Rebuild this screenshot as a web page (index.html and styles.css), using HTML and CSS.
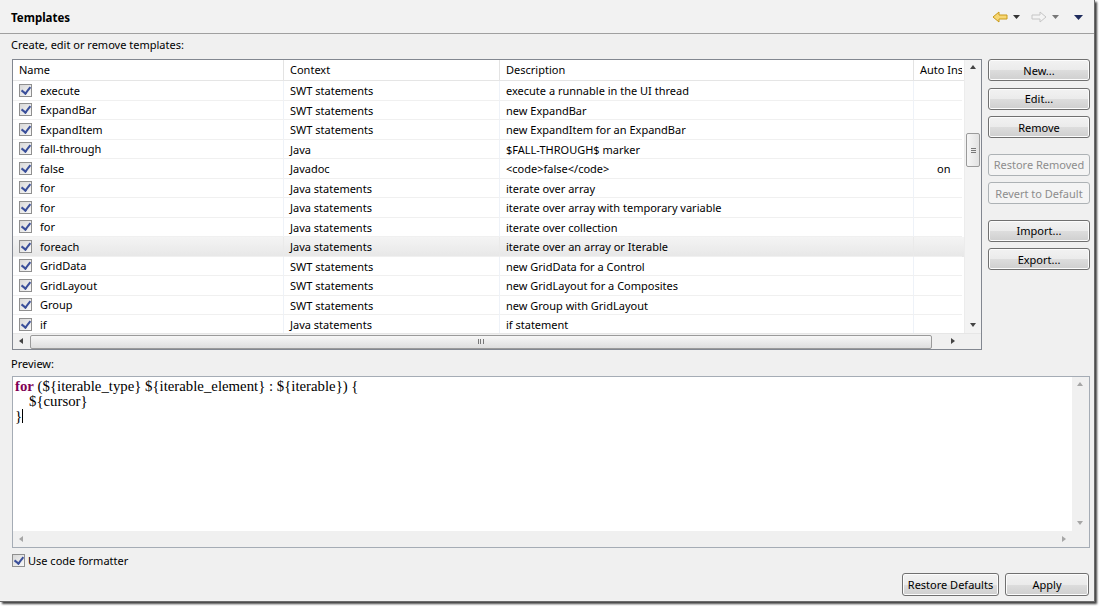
FILE: index.html
```html
<!DOCTYPE html>
<html>
<head>
<meta charset="utf-8">
<link rel="stylesheet" href="styles.css">
</head>
<body>
<div class="window">
  <div class="header">
    <div class="title">Templates</div>
    <div class="nav">
      <svg class="arrow" width="16" height="12" viewBox="0 0 16 12"><path d="M1 6 L7 1 L7 4 L15 4 L15 8 L7 8 L7 11 Z" fill="#f7d774" stroke="#c99a1a" stroke-width="1" stroke-linejoin="round"/></svg>
      <svg class="drop" width="7" height="4" viewBox="0 0 7 4"><path d="M0 0 L7 0 L3.5 4 Z" fill="#333"/></svg>
      <svg class="arrow" width="16" height="12" viewBox="0 0 16 12"><path d="M15 6 L9 1 L9 4 L1 4 L1 8 L9 8 L9 11 Z" fill="#f4f4f4" stroke="#c6c6c6" stroke-width="1" stroke-linejoin="round"/></svg>
      <svg class="drop" width="7" height="4" viewBox="0 0 7 4"><path d="M0 0 L7 0 L3.5 4 Z" fill="#777"/></svg>
      <svg class="drop big" width="9" height="5" viewBox="0 0 9 5"><path d="M0 0 L9 0 L4.5 5 Z" fill="#1e2b5c"/></svg>
    </div>
  </div>
  <div class="content">
    <div class="label">Create, edit or remove templates:</div>
    <div class="top">
      <div class="table">
        <div class="tmain">
          <div class="tcols">
            <div class="thead">
              <div class="c c1">Name</div>
              <div class="c c2">Context</div>
              <div class="c c3">Description</div>
              <div class="c c4">Auto Ins</div>
            </div>
            <div class="tbody">
              <div class="row"><div class="c c1"><span class="cb"></span>execute</div><div class="c c2">SWT statements</div><div class="c c3">execute a runnable in the UI thread</div><div class="c c4"></div></div>
              <div class="row"><div class="c c1"><span class="cb"></span>ExpandBar</div><div class="c c2">SWT statements</div><div class="c c3">new ExpandBar</div><div class="c c4"></div></div>
              <div class="row"><div class="c c1"><span class="cb"></span>ExpandItem</div><div class="c c2">SWT statements</div><div class="c c3">new ExpandItem for an ExpandBar</div><div class="c c4"></div></div>
              <div class="row"><div class="c c1"><span class="cb"></span>fall-through</div><div class="c c2">Java</div><div class="c c3">$FALL-THROUGH$ marker</div><div class="c c4"></div></div>
              <div class="row"><div class="c c1"><span class="cb"></span>false</div><div class="c c2">Javadoc</div><div class="c c3">&lt;code&gt;false&lt;/code&gt;</div><div class="c c4 on">on</div></div>
              <div class="row"><div class="c c1"><span class="cb"></span>for</div><div class="c c2">Java statements</div><div class="c c3">iterate over array</div><div class="c c4"></div></div>
              <div class="row"><div class="c c1"><span class="cb"></span>for</div><div class="c c2">Java statements</div><div class="c c3">iterate over array with temporary variable</div><div class="c c4"></div></div>
              <div class="row"><div class="c c1"><span class="cb"></span>for</div><div class="c c2">Java statements</div><div class="c c3">iterate over collection</div><div class="c c4"></div></div>
              <div class="row sel"><div class="c c1"><span class="cb"></span>foreach</div><div class="c c2">Java statements</div><div class="c c3">iterate over an array or Iterable</div><div class="c c4"></div></div>
              <div class="row"><div class="c c1"><span class="cb"></span>GridData</div><div class="c c2">SWT statements</div><div class="c c3">new GridData for a Control</div><div class="c c4"></div></div>
              <div class="row"><div class="c c1"><span class="cb"></span>GridLayout</div><div class="c c2">SWT statements</div><div class="c c3">new GridLayout for a Composites</div><div class="c c4"></div></div>
              <div class="row"><div class="c c1"><span class="cb"></span>Group</div><div class="c c2">SWT statements</div><div class="c c3">new Group with GridLayout</div><div class="c c4"></div></div>
              <div class="row"><div class="c c1"><span class="cb"></span>if</div><div class="c c2">Java statements</div><div class="c c3">if statement</div><div class="c c4"></div></div>
            </div>
          </div>
          <div class="vscroll">
            <span class="sa up"></span>
            <div class="vtrack"><div class="vthumb"><span class="grip"></span></div></div>
            <span class="sa down"></span>
          </div>
        </div>
        <div class="hscrollrow">
          <div class="hscroll">
            <span class="sa left"></span>
            <div class="hthumb"><span class="hgrip"></span></div>
            <span class="sa right"></span>
          </div>
          <div class="corner"></div>
        </div>
      </div>
      <div class="buttons">
        <button class="btn">New...</button>
        <button class="btn">Edit...</button>
        <button class="btn">Remove</button>
        <button class="btn dis gap">Restore Removed</button>
        <button class="btn dis">Revert to Default</button>
        <button class="btn gap">Import...</button>
        <button class="btn">Export...</button>
      </div>
    </div>
    <div class="label preview-label">Preview:</div>
    <div class="editor">
      <div class="emain">
        <div class="code"><div><b class="kw">for</b> (${iterable_type} ${iterable_element} : ${iterable}) {</div><div class="ind">${cursor}</div><div>}<span class="caret"></span></div></div>
        <div class="evscroll"><span class="sa up light"></span><span class="sa down light"></span></div>
      </div>
      <div class="ehscroll"><span class="sa left light"></span><span class="sa right light"></span><span class="ecorner"></span></div>
    </div>
    <div class="formatter"><span class="cb"></span>Use code formatter</div>
    <div class="bottom">
      <button class="btn rd">Restore Defaults</button>
      <button class="btn apply">Apply</button>
    </div>
  </div>
</div>
</body>
</html>
```
FILE: styles.css
```css
* { box-sizing: border-box; }
html, body { margin: 0; padding: 0; }
body {
  width: 1099px; height: 606px; background: #fff; overflow: hidden;
  font-family: "Noto Sans", "Open Sans", sans-serif; font-size: 11px; color: #000;
}
.window {
  width: 1095px; height: 602px; background: #f0f0f0;
  border-right: 1px solid #6b6b6b; border-bottom: 1px solid #6b6b6b;
  box-shadow: 2px 2px 2px rgba(0,0,0,0.75);
  display: flex; flex-direction: column;
}
.header {
  flex: none;
  height: 34px; border-bottom: 1px solid #a0a0a0;
  display: flex; align-items: center; justify-content: space-between;
  padding: 1px 11px 0 11px; background: #f2f2f2;
}
.title { font-weight: bold; font-size: 11.5px; }
.nav { display: flex; align-items: center; gap: 5px; }
.nav .drop { margin-right: 6px; }
.nav .big { margin-left: 4px; margin-right: 0; }
.content { padding: 0 0 0 11px; display: flex; flex-direction: column; flex: none; }
.content > * { flex: none; }
.label { height: 25px; line-height: 20px; padding-top: 1px; }
.top { display: flex; gap: 6px; height: 291px; }
.table {
  width: 970px; height: 291px; margin-left: 1px;
  border: 1px solid #828790; background: #fff;
  display: flex; flex-direction: column;
}
.tmain { display: flex; flex: 1; min-height: 0; }
.tcols { flex: 1; overflow: hidden; }
.thead { display: flex; height: 21px; border-bottom: 1px solid #e5e5e5; background: #fff; }
.thead .c { line-height: 20px; border-right: 1px solid #e3e3e3; }
.thead .c4 { border-right: none; }
.c { padding-left: 6px; white-space: nowrap; overflow: hidden; flex: none; }
.c1 { width: 271px; }
.c2 { width: 216px; }
.c3 { width: 414px; }
.c4 { width: 48px; }
.tbody { display: flex; flex-direction: column; }
.row { display: flex; height: 19.5px; line-height: 19px; flex: none; }
.row .c { border-right: 1px solid #eef2f8; border-bottom: 1px solid #f0f0f0; }
.row .c4 { border-right: none; }
.row .c1 { display: flex; align-items: center; }
.row.sel { background: linear-gradient(#f4f4f4, #e7e7e7); }
.row.sel .c { border-right-color: #eaeaea; }
.c4.on { padding-left: 23px; }
.cb {
  width: 13px; height: 13px; border: 1px solid #8f8f8f; background: linear-gradient(135deg,#d8d8d8,#f8f8f8);
  position: relative; display: inline-block; margin-right: 8px; flex: none;
}
.cb::after {
  content: ""; position: absolute; left: 3px; top: 0px; width: 4px; height: 7px;
  border-right: 2px solid #3a4f9a; border-bottom: 2px solid #3a4f9a; transform: rotate(38deg);
}
.vscroll {
  width: 17px; background: #f3f3f3; border-left: 1px solid #ececec;
  display: flex; flex-direction: column; align-items: center;
}
.vtrack { flex: 1; width: 100%; position: relative; }
.vthumb {
  position: absolute; left: 1px; right: 1px; top: 56px; height: 34px;
  border: 1px solid #9a9a9a; border-radius: 2px;
  background: linear-gradient(90deg, #f6f6f6, #e2e2e2);
  display: flex; align-items: center; justify-content: center;
}
.grip { width: 5px; height: 5px; border-top: 1px solid #777; border-bottom: 1px solid #777; position: relative; }
.grip::after { content: ""; position: absolute; left: 0; right: 0; top: 1px; border-top: 1px solid #777; }
.sa { width: 17px; height: 17px; position: relative; flex: none; display: block; }
.sa::after { content: ""; position: absolute; width: 0; height: 0; border: 3px solid transparent; }
.sa.up::after { left: 5px; top: 5px; border-bottom: 4px solid #444; border-top: 0; }
.sa.down::after { left: 5px; top: 7px; border-top: 4px solid #444; border-bottom: 0; }
.sa.left::after { left: 6px; top: 5px; border-right: 4px solid #444; border-left: 0; }
.sa.right::after { left: 7px; top: 5px; border-left: 4px solid #444; border-right: 0; }
.sa.light.up::after { border-bottom-color: #a6a6a6; }
.sa.light.down::after { border-top-color: #a6a6a6; }
.sa.light.left::after { border-right-color: #a6a6a6; }
.sa.light.right::after { border-left-color: #a6a6a6; }
.hscrollrow { display: flex; height: 16px; flex: none; }
.hscroll { flex: 1; background: #f0f0f0; display: flex; align-items: center; border-top: 1px solid #e6e6e6; }
.hthumb {
  width: 902px; height: 14px; border: 1px solid #9a9a9a; border-radius: 2px;
  background: linear-gradient(#f7f7f7, #dedede);
  display: flex; align-items: center; justify-content: center;
}
.hgrip { width: 6px; height: 5px; border-left: 1px solid #777; border-right: 1px solid #777; position: relative; }
.hgrip::after { content: ""; position: absolute; top: 0; bottom: 0; left: 1px; border-left: 1px solid #777; }
.hscroll .sa.right { margin-left: 12px; }
.corner { width: 17px; background: #f0f0f0; border-top: 1px solid #e6e6e6; }
.buttons { display: flex; flex-direction: column; width: 102px; }
.btn {
  font-family: inherit; font-size: 11px; color: #000; flex: none;
  height: 22px; width: 102px; margin: 0 0 6.5px 0; padding: 0;
  border: 1px solid #707070; border-radius: 3px;
  background: linear-gradient(#f2f2f2 0%, #ebebeb 50%, #dddddd 51%, #cfcfcf 100%);
  box-shadow: inset 0 0 0 1px #fcfcfc;
}
.btn.gap { margin-top: 9px; }
.btn.dis { color: #8d8d8d; border-color: #adb2b5; background: #f4f4f4; box-shadow: none; }
.preview-label { margin-top: 2px; height: 24px; line-height: 24px; padding-top: 0; }
.editor {
  width: 1078px; height: 172px; margin-left: 1px; border: 1px solid #a5acb5; background: #fff;
  display: flex; flex-direction: column;
}
.emain { flex: 1; display: flex; min-height: 0; }
.code {
  flex: 1; padding: 2px 0 0 2px;
  font-family: "Liberation Serif", "DejaVu Serif", serif; font-size: 14.8px; line-height: 15px; color: #000;
}
.ind { padding-left: 14px; }
.kw { color: #7f0055; }
.caret { display: inline-block; width: 1px; height: 14px; background: #000; vertical-align: -2px; }
.evscroll { width: 17px; background: #f0f0f0; display: flex; flex-direction: column; justify-content: space-between; }
.ehscroll { height: 16px; background: #f0f0f0; display: flex; align-items: center; flex: none; }
.ehscroll .sa.right { margin-left: auto; }
.ecorner { width: 17px; height: 16px; background: #f0f0f0; }
.formatter { display: flex; align-items: center; height: 25px; }
.formatter .cb { margin-right: 3px; margin-left: 1px; }
.bottom { display: flex; justify-content: flex-end; gap: 6px; padding-right: 5px; }
.btn.rd { width: 97px; height: 23px; }
.btn.apply { width: 84px; height: 23px; }
```
